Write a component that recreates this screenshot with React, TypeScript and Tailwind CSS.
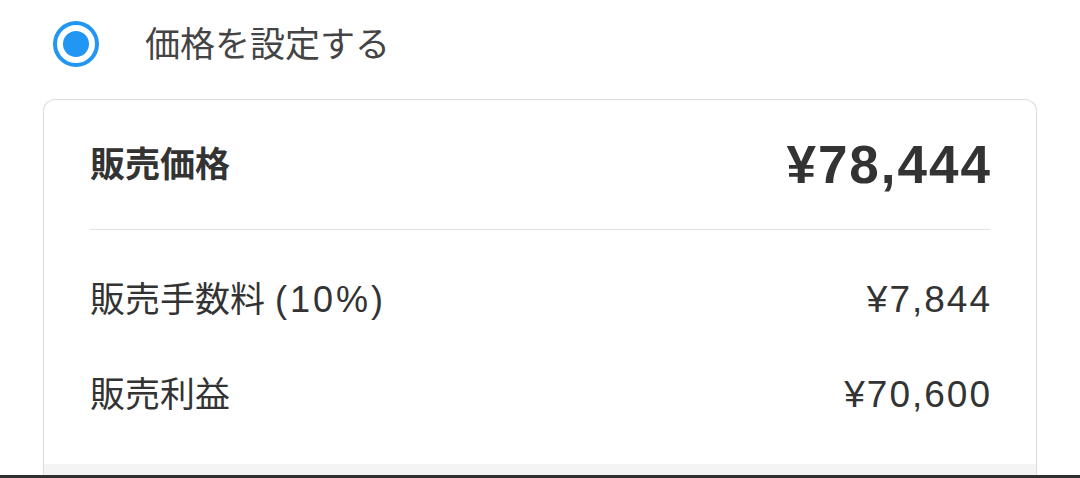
import React from "react";

const jp = { fontFamily: '"Liberation Sans", "Noto Sans CJK JP", sans-serif' };

type Row = { label: string; note?: string; value: string };

const rows: Row[] = [
  { label: "販売手数料", note: "(10%)", value: "¥7,844" },
  { label: "販売利益", value: "¥70,600" },
];

const App = () => {
  return (
    <div className="w-[1080px] h-[478px] bg-white overflow-hidden flex flex-col" style={jp}>
      {/* radio */}
      <div className="h-[88px] flex items-center pl-[53px] gap-[46px]">
        <div className="w-[46px] h-[46px] rounded-full border-[4px] border-[#2196f3] flex items-center justify-center">
          <div className="w-[26px] h-[26px] rounded-full bg-[#2196f3]" />
        </div>
        <span className="text-[35px] text-[#444] leading-none">価格を設定する</span>
      </div>

      {/* price card */}
      <div className="mx-[43px] mt-[11px] border border-[#dcdcdc] border-b-0 rounded-t-[12px] flex flex-col flex-1">
        <div className="px-[46px]">
          <div className="h-[129px] flex items-center justify-between">
            <span className="text-[35px] font-bold text-[#333] leading-none">販売価格</span>
            <span className="text-[53px] font-bold text-[#333] leading-none tracking-[2px] -mr-[2px]">¥78,444</span>
          </div>
          <div className="h-px bg-[#e2e2e2]" />
          <div className="pt-[22px] pb-[22px]">
            {rows.map((r, i) => (
              <div key={i} className="h-[95px] flex items-center justify-between">
                <span className="text-[35px] text-[#333] leading-none">
                  {r.label}
                  {r.note && <span className="ml-[10px] text-[36px] tracking-[3px]">{r.note}</span>}
                </span>
                <span className="text-[37px] text-[#333] leading-none tracking-[2px] -mr-[2px]">{r.value}</span>
              </div>
            ))}
          </div>
        </div>
        <div className="flex-1 bg-[#f4f4f4]" />
      </div>
      <div className="h-[3px] bg-[#2f2f2f]" />
    </div>
  );
};

export default App;
